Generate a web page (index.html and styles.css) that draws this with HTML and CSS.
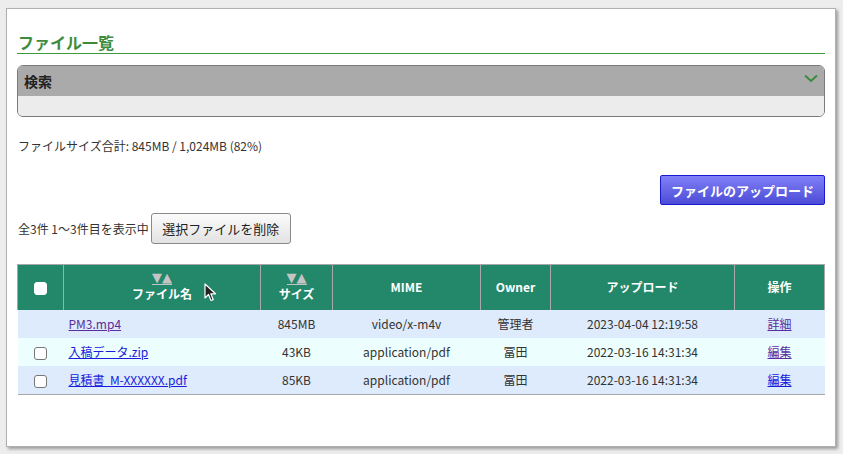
FILE: index.html
```html
<!DOCTYPE html>
<html lang="ja">
<head>
<meta charset="utf-8">
<title>ファイル一覧</title>
<link rel="stylesheet" href="styles.css">
</head>
<body>
<div class="panel">
  <h2 class="title">ファイル一覧</h2>
  <div class="search">
    <div class="search-head">
      <span>検索</span>
      <svg class="chev" width="14" height="9" viewBox="0 0 14 9"><path d="M1 1.5 L7 7 L13 1.5" fill="none" stroke="#3a8a3a" stroke-width="2"/></svg>
    </div>
    <div class="search-body"></div>
  </div>
  <p class="total">ファイルサイズ合計: 845MB / 1,024MB (82%)</p>
  <div class="upload-row"><button class="btn-upload">ファイルのアップロード</button></div>
  <div class="count-row"><span>全3件 1〜3件目を表示中</span><button class="btn-delete">選択ファイルを削除</button></div>
  <table class="files">
    <colgroup>
      <col class="c1"><col class="c2"><col class="c3"><col class="c4"><col class="c5"><col class="c6"><col class="c7">
    </colgroup>
    <thead>
      <tr>
        <th><span class="cb cb-head"></span></th>
        <th><a class="sort">▼▲</a><span class="lbl">ファイル名</span></th>
        <th><a class="sort">▼▲</a><span class="lbl">サイズ</span></th>
        <th>MIME</th>
        <th>Owner</th>
        <th>アップロード</th>
        <th>操作</th>
      </tr>
    </thead>
    <tbody>
      <tr class="odd">
        <td></td>
        <td class="name"><a class="visited">PM3.mp4</a></td>
        <td>845MB</td>
        <td>video/x-m4v</td>
        <td>管理者</td>
        <td>2023-04-04 12:19:58</td>
        <td><a class="visited">詳細</a></td>
      </tr>
      <tr class="even">
        <td><span class="cb"></span></td>
        <td class="name"><a class="link">入稿データ.zip</a></td>
        <td>43KB</td>
        <td>application/pdf</td>
        <td>冨田</td>
        <td>2022-03-16 14:31:34</td>
        <td><a class="visited">編集</a></td>
      </tr>
      <tr class="odd">
        <td><span class="cb"></span></td>
        <td class="name"><a class="link">見積書&nbsp; M-XXXXXX.pdf</a></td>
        <td>85KB</td>
        <td>application/pdf</td>
        <td>冨田</td>
        <td>2022-03-16 14:31:34</td>
        <td><a class="link">編集</a></td>
      </tr>
    </tbody>
  </table>
  <svg class="cursor" width="14" height="20" viewBox="0 0 14 20"><path d="M1 1 L1 15 L4.5 11.5 L7 17.5 L9.2 16.6 L6.8 10.8 L11.5 10.8 Z" fill="#222" stroke="#fff" stroke-width="1.2" stroke-linejoin="round"/></svg>
</div>
</body>
</html>
```
FILE: styles.css
```css
html, body {
  margin: 0;
  padding: 0;
}
body {
  background: #ededed;
  font-family: "Noto Sans CJK JP", "Noto Sans", sans-serif;
  color: #333;
  font-size: 12px;
  width: 843px;
  height: 454px;
  overflow: hidden;
}
.panel {
  position: relative;
  box-sizing: border-box;
  margin: 8px 0 0 6px;
  width: 830px;
  height: 439px;
  background: #fff;
  border: 1px solid #b0b0b0;
  box-shadow: 2px 2px 3px rgba(0, 0, 0, 0.35);
  padding: 23px 10px 0 10px;
}
.title {
  margin: 0;
  font-size: 16px;
  line-height: 20px;
  font-weight: bold;
  color: #3d8c3d;
  padding: 0 0 1px 1px;
  border-bottom: 1px solid #3b9a3b;
}
.search {
  margin-top: 11px;
  border: 1px solid #7a7a7a;
  border-radius: 6px;
  overflow: hidden;
}
.search-head {
  height: 30px;
  background: #aaaaaa;
  display: flex;
  align-items: center;
  justify-content: space-between;
  padding: 0 6px 0 6px;
  font-size: 14px;
  font-weight: bold;
  color: #222;
}
.chev {
  margin-top: -6px;
}
.search-body {
  height: 20px;
  background: #ececec;
}
.total {
  margin: 20px 0 0 1px;
  line-height: 18px;
  font-size: 12px;
}
.upload-row {
  margin-top: 20px;
  display: flex;
  justify-content: flex-end;
}
.btn-upload {
  width: 165px;
  height: 30px;
  border: 1px solid #1a1ad0;
  border-radius: 2px;
  background: linear-gradient(#8080f8, #4c4cd6);
  color: #fff;
  font-family: "Noto Sans CJK JP", sans-serif;
  font-size: 13px;
  font-weight: bold;
  padding: 0;
}
.count-row {
  margin-top: 8px;
  display: flex;
  align-items: center;
  padding-left: 1px;
}
.btn-delete {
  margin-left: 2px;
  width: 140px;
  height: 31px;
  border: 1px solid #8a8a8a;
  border-radius: 3px;
  background: linear-gradient(#fbfbfb, #e2e2e2);
  color: #222;
  font-family: "Noto Sans CJK JP", sans-serif;
  font-size: 13px;
  padding: 0;
}
.files {
  margin-top: 20px;
  width: 807px;
  border-collapse: collapse;
  table-layout: fixed;
  border-top: 1px solid #a8a8a8;
  border-bottom: 1px solid #a8a8a8;
}
.c1 { width: 46px; }
.c2 { width: 197px; }
.c3 { width: 72px; }
.c4 { width: 148px; }
.c5 { width: 70px; }
.c6 { width: 184px; }
.c7 { width: 90px; }
.files thead tr {
  height: 45px;
}
.files th {
  background: #23876a;
  color: #fff;
  font-size: 12px;
  font-weight: bold;
  padding: 0;
  border-left: 1px solid #a8a8a8;
  border-right: 1px solid #a8a8a8;
  line-height: 16px;
  text-align: center;
  vertical-align: middle;
}
.sort {
  display: block;
  width: max-content;
  margin: 0 auto 1px;
  color: #c4c4c4;
  font-size: 13px;
  line-height: 12px;
  text-decoration: none;
  border-bottom: 1px solid #c4c4c4;
  font-family: "DejaVu Sans", sans-serif;
}
.lbl {
  display: block;
  line-height: 16px;
}
.files td {
  height: 28px;
  padding: 0;
  text-align: center;
  font-size: 12px;
  color: #333;
}
.files td.name {
  text-align: left;
  padding-left: 5px;
}
tr.odd td { background: #ddebfc; }
tr.even td { background: #ecfffe; }
.link {
  color: #1a1add;
  text-decoration: underline;
}
.visited {
  color: #5a2e9e;
  text-decoration: underline;
}
.cb {
  display: inline-block;
  box-sizing: border-box;
  width: 13px;
  height: 13px;
  border: 1px solid #777;
  border-radius: 3px;
  background: #fff;
  vertical-align: middle;
}
.cb-head {
  border-color: #fff;
}
.cursor {
  position: absolute;
  left: 197px;
  top: 274px;
}
```
